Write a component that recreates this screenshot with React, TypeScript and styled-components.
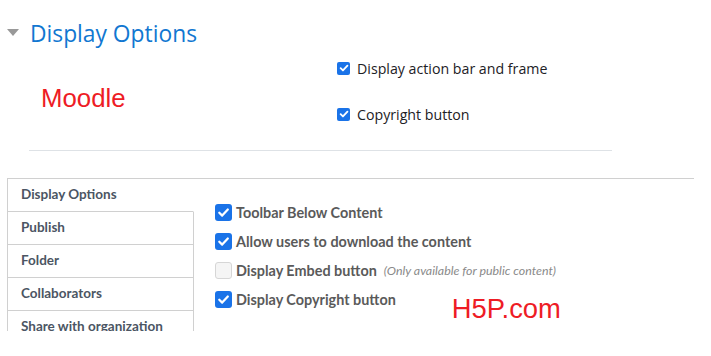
import React from "react";
import styled, { createGlobalStyle } from "styled-components";

const Global = createGlobalStyle`
  html, body { margin: 0; padding: 0; background: #fff; }
  body { font-family: "Open Sans", "Noto Sans", sans-serif; }
`;

const Page = styled.div`
  width: 711px;
  height: 356px;
  overflow: hidden;
`;

const SectionHeader = styled.div`
  display: flex;
  align-items: center;
  gap: 11px;
  padding: 16px 0 0 7px;
  height: 35px;
`;

const Caret = styled.span`
  width: 0;
  height: 0;
  border-left: 6px solid transparent;
  border-right: 6px solid transparent;
  border-top: 7px solid #999;
  margin-top: -2px;
`;

const Heading = styled.h3`
  margin: 0;
  font-family: "Open Sans", sans-serif;
  font-weight: 400;
  font-size: 22.8px;
  color: #1177d1;
  line-height: 34px;
`;

const MoodleForm = styled.div`
  margin-left: 29px;
  width: 583px;
  display: grid;
  grid-template-columns: 308px 1fr;
  padding-top: 7px;
  height: 92px;
  border-bottom: 1px solid #dee2e6;
`;

const Watermark = styled.div<{ $pad: string; $size: number }>`
  font-family: "Liberation Sans", Arial, sans-serif;
  font-size: ${(p) => p.$size}px;
  line-height: 30px;
  color: #ee1c25;
  padding: ${(p) => p.$pad};
`;

const MoodleChecks = styled.div`
  display: flex;
  flex-direction: column;
  gap: 26px;
`;

const MoodleRow = styled.label`
  display: flex;
  align-items: center;
  gap: 7px;
  font-family: "Open Sans", sans-serif;
  font-size: 14.2px;
  color: #1d2125;
  height: 20px;
`;

const SmallBox = styled.span`
  width: 13px;
  height: 13px;
  border-radius: 2px;
  background: #1a73e8;
  display: flex;
  align-items: center;
  justify-content: center;
`;

const Tabs = styled.div`
  margin: 27px 0 0 7px;
  width: 687px;
  height: 153px;
  overflow: hidden;
  border-top: 1px solid #d0d0d0;
  border-left: 1px solid #d0d0d0;
  display: flex;
  box-sizing: border-box;
`;

const TabList = styled.div`
  width: 186px;
  flex: none;
  display: flex;
  flex-direction: column;
`;

const Tab = styled.div<{ $active?: boolean }>`
  height: 33px;
  flex: none;
  box-sizing: border-box;
  border-bottom: 1px solid #d0d0d0;
  border-right: ${(p) => (p.$active ? "1px solid transparent" : "1px solid #d0d0d0")};
  padding: 0 0 2px 13px;
  display: flex;
  align-items: center;
  font-family: "Lato", "Noto Sans", sans-serif;
  font-weight: 700;
  font-size: 13.5px;
  color: #4b5563;
`;

const Panel = styled.div`
  flex: 1;
  padding: 24px 0 0 21px;
  display: flex;
  flex-direction: column;
  gap: 11px;
`;

const Row = styled.div`
  display: flex;
  align-items: center;
  gap: 4px;
  height: 18px;
  font-family: "Lato", "Noto Sans", sans-serif;
  font-weight: 700;
  font-size: 14.4px;
  color: #5a5a5a;
`;

const BigBox = styled.span<{ $checked: boolean }>`
  width: 17px;
  height: 17px;
  box-sizing: border-box;
  border-radius: 3px;
  background: ${(p) => (p.$checked ? "#1a73e8" : "#f5f5f5")};
  border: ${(p) => (p.$checked ? "none" : "1px solid #d6d6d6")};
  display: flex;
  align-items: center;
  justify-content: center;
`;

const Note = styled.span`
  font-weight: 400;
  font-style: italic;
  font-size: 12.4px;
  color: #8a8a8a;
  margin-left: 3px;
`;

const Check = ({ size }: { size: number }) => (
  <svg width={size} height={size} viewBox="0 0 16 16">
    <path d="M3.5 8.3 L6.6 11.3 L12.6 4.8" fill="none" stroke="#fff" strokeWidth="2.4" strokeLinecap="round" strokeLinejoin="round" />
  </svg>
);

const OptionLine = styled.div`
  display: flex;
  align-items: flex-start;
  height: 18px;
  overflow: visible;
`;

const H5PMark = styled(Watermark)`
  flex: none;
  height: 18px;
  margin-top: 4px;
`;

export default function App() {
  const options = [
    { label: "Toolbar Below Content", checked: true },
    { label: "Allow users to download the content", checked: true },
    { label: "Display Embed button", checked: false, note: "(Only available for public content)" },
    { label: "Display Copyright button", checked: true },
  ];
  return (
    <Page>
      <Global />
      <SectionHeader>
        <Caret />
        <Heading>Display Options</Heading>
      </SectionHeader>
      <MoodleForm>
        <Watermark $pad="25px 0 0 12px" $size={25.8}>Moodle</Watermark>
        <MoodleChecks>
          <MoodleRow>
            <SmallBox><Check size={12} /></SmallBox>
            Display action bar and frame
          </MoodleRow>
          <MoodleRow>
            <SmallBox><Check size={12} /></SmallBox>
            Copyright button
          </MoodleRow>
        </MoodleChecks>
      </MoodleForm>
      <Tabs>
        <TabList>
          <Tab $active>Display Options</Tab>
          <Tab>Publish</Tab>
          <Tab>Folder</Tab>
          <Tab>Collaborators</Tab>
          <Tab>Share with organization</Tab>
        </TabList>
        <Panel>
          {options.map((o) => (
            <OptionLine key={o.label}>
              <Row>
                <BigBox $checked={o.checked}>{o.checked && <Check size={15} />}</BigBox>
                {o.label}
                {o.note && <Note>{o.note}</Note>}
              </Row>
              {o.label === "Display Copyright button" && (
                <H5PMark $pad="0 0 0 56px" $size={27.4}>H5P.com</H5PMark>
              )}
            </OptionLine>
          ))}
        </Panel>
      </Tabs>
    </Page>
  );
}
